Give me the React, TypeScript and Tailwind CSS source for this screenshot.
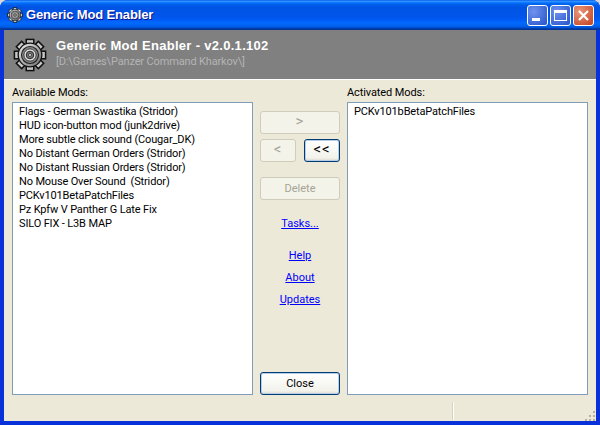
const availableMods = [
  "Flags - German Swastika (Stridor)",
  "HUD icon-button mod (junk2drive)",
  "More subtle click sound (Cougar_DK)",
  "No Distant German Orders (Stridor)",
  "No Distant Russian Orders (Stridor)",
  "No Mouse Over Sound  (Stridor)",
  "PCKv101BetaPatchFiles",
  "Pz Kpfw V Panther G Late Fix",
  "SILO FIX - L3B MAP",
];

function Gear({ size, id }: { size: number; id: string }) {
  const teeth = [0, 45, 90, 135, 180, 225, 270, 315];
  return (
    <svg width={size} height={size} viewBox="0 0 36 36">
      <defs>
        <linearGradient id={id} x1="0" y1="0" x2="1" y2="1">
          <stop offset="0" stopColor="#f0f0f0" />
          <stop offset="1" stopColor="#6a6a6a" />
        </linearGradient>
      </defs>
      {teeth.map((a) => (
        <rect key={a} x="14" y="1.5" width="8" height="8" fill="#c8c8c8" stroke="#111" strokeWidth="1.6" transform={`rotate(${a} 18 18)`} />
      ))}
      <circle cx="18" cy="18" r="12.5" fill={`url(#${id})`} stroke="#111" strokeWidth="1.4" />
      <circle cx="18" cy="18" r="9" fill="#8a8a8a" stroke="#222" strokeWidth="1.2" />
      <circle cx="18" cy="18" r="6.5" fill="#dedede" stroke="#333" strokeWidth="1" />
      <circle cx="18" cy="18" r="4" fill="#777" stroke="#222" strokeWidth="1" />
      <circle cx="18" cy="18" r="1.6" fill="#e8e8e8" stroke="#222" strokeWidth="0.8" />
    </svg>
  );
}

function XpButton({ label, disabled, wide, arrow }: { label: string; disabled?: boolean; wide?: boolean; arrow?: boolean }) {
  return (
    <button
      className={`h-[23px] rounded-[3px] border leading-none ${arrow ? "pb-[2px] text-[15px] tracking-[1px]" : "text-[11px]"} ${wide ? "w-[80px]" : "w-[36px]"} ${
        disabled
          ? "border-[#cfccbb] bg-[#f4f3ea] text-[#a5a395]"
          : "border-[#003c74] bg-[linear-gradient(180deg,#ffffff,#f3f3ec_85%,#dcd8cc)] text-black shadow-[inset_0_0_0_1px_#b6cce8]"
      }`}
    >
      {label}
    </button>
  );
}

function ModList({ title, items }: { title: string; items: string[] }) {
  return (
    <div className="flex w-[241px] flex-col">
      <div className="h-[22px] pt-[6px] text-[11px] leading-[14px] tracking-[-0.1px] text-black">{title}</div>
      <div className="h-[293px] border border-[#7f9db9] bg-white px-[6px] py-[2px]">
        {items.map((m) => (
          <div key={m} className="h-[14px] whitespace-pre text-[11px] leading-[14px] tracking-[-0.15px] text-black">{m}</div>
        ))}
      </div>
    </div>
  );
}

export default function App() {
  return (
    <div className="h-[425px] w-[600px] overflow-hidden bg-[#d8d8d8] font-['Roboto','Liberation_Sans',sans-serif]">
      <div className="flex h-full flex-col overflow-hidden rounded-t-[8px] bg-[#0831d9]">
        {/* title bar */}
        <div className="flex h-[30px] shrink-0 items-center bg-[linear-gradient(180deg,#0058ee_0%,#3593ff_4%,#288eff_6%,#127dff_8%,#036ffc_10%,#0262ee_14%,#0057e5_20%,#0054e3_24%,#0055eb_56%,#005bf5_66%,#026afe_76%,#0062ef_86%,#0052d6_92%,#0040ab_94%,#003092_100%)] pl-[7px] pr-[6px]">
          <Gear size={16} id="gear-small" />
          <span className="ml-[3px] font-['Liberation_Sans',sans-serif] text-[13px] font-bold tracking-[-0.15px] text-white [text-shadow:1px_1px_#0f1089]">Generic Mod Enabler</span>
          <div className="ml-auto flex gap-[2px]">
            <div className="flex h-[21px] w-[21px] items-end rounded-[3px] border border-white bg-[radial-gradient(circle_at_30%_30%,#6f92ee,#2553c9)] pb-[4px] pl-[4px]">
              <div className="h-[3px] w-[8px] bg-white" />
            </div>
            <div className="flex h-[21px] w-[21px] items-center justify-center rounded-[3px] border border-white bg-[radial-gradient(circle_at_30%_30%,#6f92ee,#2553c9)]">
              <div className="h-[11px] w-[13px] border border-t-[3px] border-white" />
            </div>
            <div className="flex h-[21px] w-[21px] items-center justify-center rounded-[3px] border border-white bg-[radial-gradient(circle_at_30%_30%,#e8987a,#c4401f)]">
              <svg width="13" height="13" viewBox="0 0 13 13">
                <path d="M2 2 L11 11 M11 2 L2 11" stroke="#fff" strokeWidth="2.2" />
              </svg>
            </div>
          </div>
        </div>

        <div className="mx-[4px] mb-[4px] flex min-h-0 flex-1 flex-col bg-[#ece9d8]">
          {/* header */}
          <div className="flex h-[50px] shrink-0 items-center border-b border-white bg-[#808080] pl-[9px]">
            <Gear size={34} id="gear-large" />
            <div className="mb-[2px] ml-[9px]">
              <div className="font-['Liberation_Sans',sans-serif] text-[13px] font-bold leading-[15px] tracking-[0.3px] text-white">Generic Mod Enabler - v2.0.1.102</div>
              <div className="mt-px text-[11px] leading-[15px] tracking-[-0.15px] text-[#b4b4b4]">[D:\Games\Panzer Command Kharkov\]</div>
            </div>
          </div>

          {/* main */}
          <div className="flex px-[8px]">
            <ModList title="Available Mods:" items={availableMods} />
            <div className="flex h-[315px] w-[94px] flex-col items-center pt-[31px]">
              <XpButton label=">" disabled wide arrow />
              <div className="mt-[5px] flex w-[80px] justify-between">
                <XpButton label="<" disabled arrow />
                <XpButton label="<<" arrow />
              </div>
              <div className="mt-[13px]">
                <XpButton label="Delete" disabled wide />
              </div>
              <a className="mt-[17px] text-[11px] leading-[14px] text-[#0000ff] underline">Tasks...</a>
              <a className="mt-[18px] text-[11px] leading-[14px] text-[#0000ff] underline">Help</a>
              <a className="mt-[8px] text-[11px] leading-[14px] text-[#0000ff] underline">About</a>
              <a className="mt-[8px] text-[11px] leading-[14px] text-[#0000ff] underline">Updates</a>
              <div className="mt-auto">
                <XpButton label="Close" wide />
              </div>
            </div>
            <ModList title="Activated Mods:" items={["PCKv101bBetaPatchFiles"]} />
          </div>

          {/* status bar */}
          <div className="flex flex-1 items-end justify-end">
            <div className="mb-[1px] mr-[130px] h-[18px] w-[2px] border-l border-r border-l-[#d5d2c0] border-r-white" />
            <div className="relative h-[12px] w-[12px]">
              <div className="absolute bottom-0 right-[1px] h-[2px] w-[2px] bg-[#b5b2a2]" />
              <div className="absolute bottom-0 right-[5px] h-[2px] w-[2px] bg-[#b5b2a2]" />
              <div className="absolute bottom-0 right-[9px] h-[2px] w-[2px] bg-[#b5b2a2]" />
              <div className="absolute bottom-[4px] right-[1px] h-[2px] w-[2px] bg-[#b5b2a2]" />
              <div className="absolute bottom-[4px] right-[5px] h-[2px] w-[2px] bg-[#b5b2a2]" />
              <div className="absolute bottom-[8px] right-[1px] h-[2px] w-[2px] bg-[#b5b2a2]" />
            </div>
          </div>
        </div>
      </div>
    </div>
  );
}
